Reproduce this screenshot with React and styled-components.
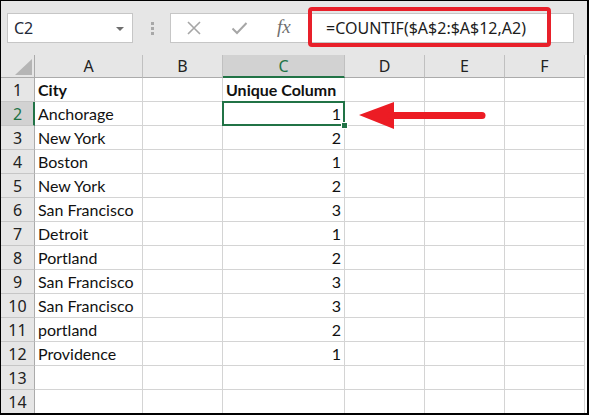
import React from 'react';
import styled, { createGlobalStyle } from 'styled-components';

const GlobalStyle = createGlobalStyle`
  body {
    margin: 0;
    background: #fff;
    font-family: "Noto Sans", "Open Sans", sans-serif;
  }
`;

const green = '#217346';

const rows = [
  ['City', '', 'Unique Column'],
  ['Anchorage', '', 1],
  ['New York', '', 2],
  ['Boston', '', 1],
  ['New York', '', 2],
  ['San Francisco', '', 3],
  ['Detroit', '', 1],
  ['Portland', '', 2],
  ['San Francisco', '', 3],
  ['San Francisco', '', 3],
  ['portland', '', 2],
  ['Providence', '', 1],
  ['', '', ''],
  ['', '', ''],
];

const columns = ['A', 'B', 'C', 'D', 'E', 'F'];

const App = () => {
  return (
    <>
      <GlobalStyle />
      <Frame>
        <Toolbar>
          <NameBox>
            <span>C2</span>
            <Caret />
          </NameBox>
          <Grip>
            <i />
            <i />
            <i />
          </Grip>
          <FormulaBar>
            <ToolIcon>
              <svg width="16" height="16" viewBox="0 0 16 16">
                <path d="M2 2 L14 14 M14 2 L2 14" stroke="#a6a6a6" strokeWidth="1.6" fill="none" />
              </svg>
            </ToolIcon>
            <ToolIcon>
              <svg width="17" height="16" viewBox="0 0 17 16">
                <path d="M1.5 8.5 L6 13 L15.5 3" stroke="#a6a6a6" strokeWidth="2" fill="none" />
              </svg>
            </ToolIcon>
            <Fx>fx</Fx>
            <FormulaText>=COUNTIF($A$2:$A$12,A2)</FormulaText>
          </FormulaBar>
        </Toolbar>
        <Highlight />

        <Sheet>
          <Corner />
          {columns.map((c) => (
            <ColHeader key={c} $active={c === 'C'}>{c}</ColHeader>
          ))}
          <Spare />
          {rows.map((r, i) => (
            <React.Fragment key={i}>
              <RowHeader $active={i === 1}>{i + 1}</RowHeader>
              <Cell $bold={i === 0}>{r[0]}</Cell>
              <Cell />
              <Cell $bold={i === 0} $num={i > 0} $selected={i === 1}>{r[2]}</Cell>
              <Cell />
              <Cell />
              <Cell />
              <Spare />
            </React.Fragment>
          ))}
        </Sheet>

        <Arrow width="140" height="34" viewBox="0 0 140 34">
          <path d="M1 13 L36 0 L36 27 Z" fill="#ec1c24" />
          <line x1="33" y1="13.5" x2="124" y2="13.5" stroke="#ec1c24" strokeWidth="7" strokeLinecap="round" />
        </Arrow>
      </Frame>
    </>
  );
};

const Frame = styled.div`
  position: relative;
  width: 589px;
  height: 415px;
  box-sizing: border-box;
  border-style: solid;
  border-color: #000;
  border-width: 1px 2px 2px 1px;
  overflow: hidden;
  background: #fff;
`;

const Toolbar = styled.div`
  height: 54px;
  background: #e6e6e6;
  display: flex;
  align-items: center;
  padding-left: 6px;
  padding-right: 13px;
  box-sizing: border-box;
`;

const NameBox = styled.div`
  width: 126px;
  height: 30px;
  box-sizing: border-box;
  border: 1px solid #c6c6c6;
  background: #fff;
  display: flex;
  align-items: center;
  justify-content: space-between;
  padding: 0 8px 0 6px;
  font-size: 16px;
  color: #1f2a3a;
`;

const Caret = styled.span`
  width: 0;
  height: 0;
  border-left: 4px solid transparent;
  border-right: 4px solid transparent;
  border-top: 4px solid #6e6e6e;
  margin-top: 1px;
`;

const Grip = styled.div`
  margin: 0 16px 0 18px;
  display: flex;
  flex-direction: column;
  gap: 2px;

  i {
    display: block;
    width: 3px;
    height: 3px;
    background: #a8a8a8;
  }
`;

const FormulaBar = styled.div`
  flex: 1;
  height: 30px;
  box-sizing: border-box;
  border: 1px solid #c6c6c6;
  background: #fff;
  display: flex;
  align-items: center;
  padding-left: 14px;
`;

const ToolIcon = styled.span`
  width: 17px;
  display: flex;
  justify-content: center;
  margin-right: 29px;
`;

const Fx = styled.span`
  font-family: "Liberation Serif", "DejaVu Serif", serif;
  font-style: italic;
  font-size: 19px;
  color: #6f6f6f;
  width: 17px;
  margin-top: -3px;
`;

const FormulaText = styled.span`
  margin-left: 32px;
  font-size: 16px;
  color: #1c1c1c;
`;

const Highlight = styled.div`
  position: absolute;
  left: 307px;
  top: 6px;
  width: 243px;
  height: 40px;
  box-sizing: border-box;
  border: 4px solid #e8202a;
  border-radius: 4px;
  pointer-events: none;
`;

const Sheet = styled.div`
  display: grid;
  grid-template-columns: 34px 108px 80px 122px 80px 80px 80px 1fr;
  grid-template-rows: 23px;
  grid-auto-rows: 24px;
`;

const Corner = styled.div`
  position: relative;
  background: #e6e6e6;
  border-right: 1px solid #ababab;
  border-bottom: 1px solid #ababab;

  &::after {
    content: '';
    position: absolute;
    right: 2px;
    bottom: 2px;
    width: 0;
    height: 0;
    border-left: 17px solid transparent;
    border-bottom: 16px solid #b5b5b5;
  }
`;

const ColHeader = styled.div`
  background: ${(p) => (p.$active ? '#d2d2d2' : '#e6e6e6')};
  color: ${(p) => (p.$active ? green : '#222')};
  border-right: 1px solid #c0c0c0;
  border-bottom: ${(p) => (p.$active ? `2px solid ${green}` : '1px solid #ababab')};
  box-sizing: border-box;
  display: flex;
  align-items: center;
  justify-content: center;
  font-size: 16px;
  padding-top: ${(p) => (p.$active ? '1px' : '0')};
`;

const Spare = styled.div`
  background: #fff;
`;

const RowHeader = styled.div`
  background: ${(p) => (p.$active ? '#d2d2d2' : '#e6e6e6')};
  color: ${(p) => (p.$active ? green : '#222')};
  border-right: ${(p) => (p.$active ? `2px solid ${green}` : '1px solid #ababab')};
  border-bottom: 1px solid #c6c6c6;
  box-sizing: border-box;
  display: flex;
  align-items: center;
  justify-content: center;
  font-size: 16px;
  padding-left: ${(p) => (p.$active ? '1px' : '0')};
`;

const Cell = styled.div`
  position: relative;
  border-right: 1px solid #d4d4d4;
  border-bottom: 1px solid #d4d4d4;
  box-sizing: border-box;
  font-family: Lato, "Noto Sans", sans-serif;
  font-size: 16px;
  font-weight: ${(p) => (p.$bold ? 700 : 400)};
  color: #111;
  line-height: 24px;
  padding: 0 3px;
  text-align: ${(p) => (p.$num ? 'right' : 'left')};
  white-space: nowrap;

  ${(p) =>
    p.$selected &&
    `
    &::after {
      content: '';
      position: absolute;
      left: -1px;
      top: -1px;
      right: -1px;
      bottom: -1px;
      border: 2px solid ${green};
    }
    &::before {
      content: '';
      position: absolute;
      right: -4px;
      bottom: -4px;
      width: 5px;
      height: 5px;
      background: ${green};
      border: 1px solid #fff;
      z-index: 2;
    }
  `}
`;

const Arrow = styled.svg`
  position: absolute;
  left: 357px;
  top: 101px;
  overflow: visible;
`;

export default App;
